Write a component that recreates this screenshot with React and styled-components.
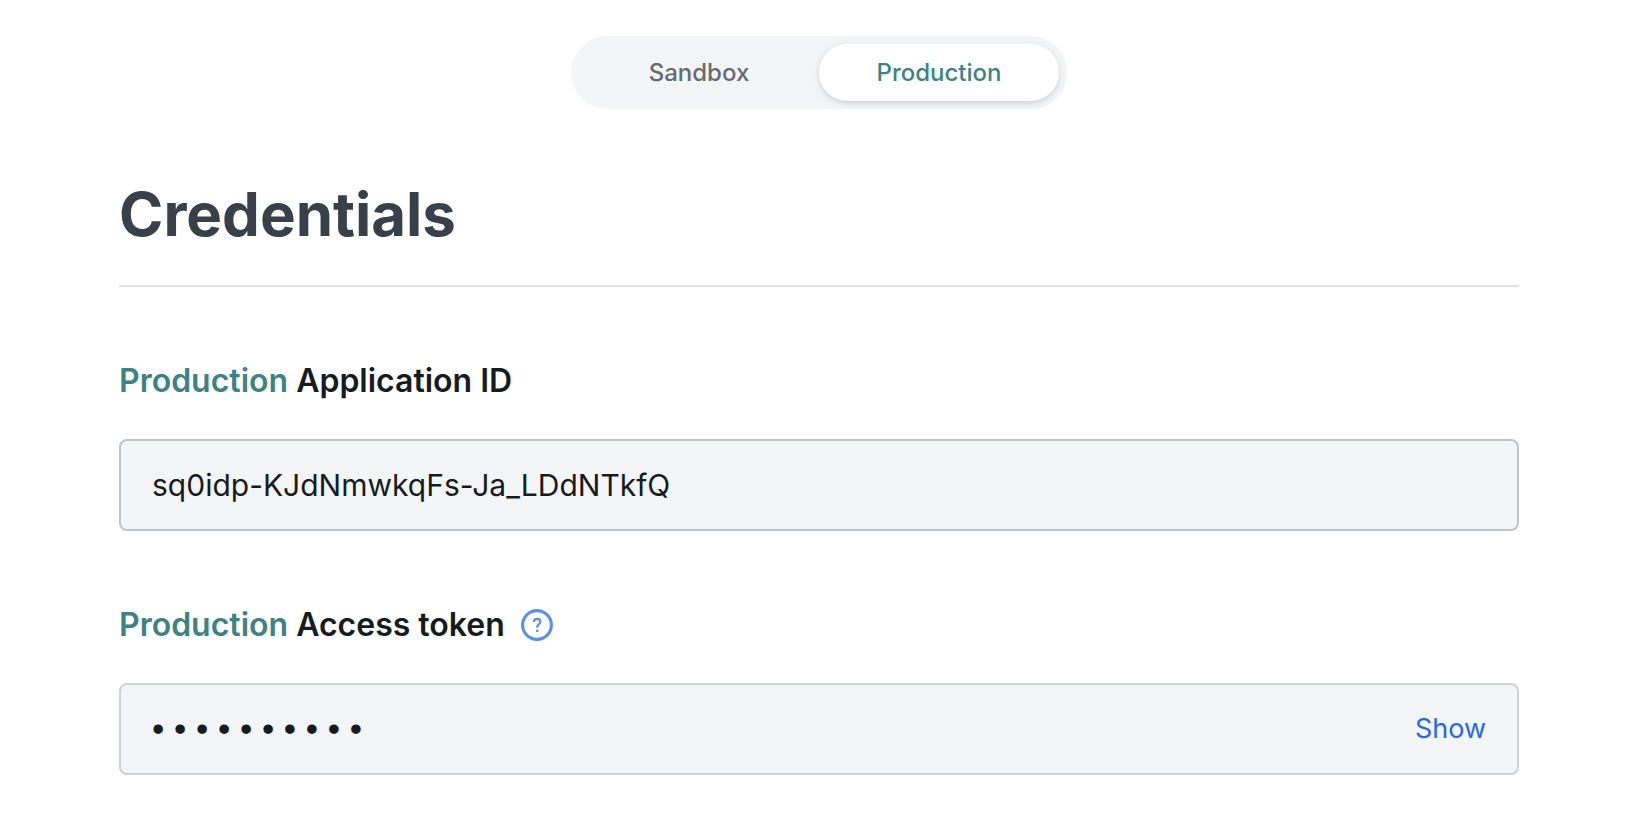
import React, { useState } from "react";
import styled, { createGlobalStyle } from "styled-components";

const GlobalStyle = createGlobalStyle`
  * {
    box-sizing: border-box;
  }
  body {
    margin: 0;
    background-color: #ffffff;
    font-family: "Inter", "Roboto", sans-serif;
    color: #161b20;
  }
  button, input {
    font-family: inherit;
  }
`;

const Page = styled.main`
  display: flex;
  flex-direction: column;
  padding: 36px 117px 40px 119px;
  @media (max-width: 760px) {
    padding: 24px 20px;
  }
`;

const Toggle = styled.div`
  display: flex;
  align-self: center;
  padding: 8px;
  border-radius: 36px;
  background-color: #f4f5f7;
`;

const ToggleButton = styled.button`
  width: 240px;
  height: 57px;
  padding: 0;
  border: none;
  border-radius: 28px;
  font-size: 24px;
  font-weight: 500;
  cursor: pointer;
  color: ${({ $active }) => ($active ? "#3e8286" : "#666b72")};
  background-color: ${({ $active }) => ($active ? "#ffffff" : "transparent")};
  box-shadow: ${({ $active }) =>
    $active
      ? "0 2px 4px rgba(0, 0, 0, 0.12), 0 2px 16px rgba(0, 0, 0, 0.05)"
      : "none"};
  @media (max-width: 760px) {
    width: 150px;
  }
`;

const Title = styled.h1`
  margin: 69px 0 0;
  padding-bottom: 35px;
  border-bottom: 2px solid #e0e1e3;
  font-size: 60px;
  font-weight: 700;
  line-height: 72px;
  color: #3a404a;
`;

const Field = styled.section`
  display: flex;
  flex-direction: column;
  gap: 38px;
  margin-top: 74px;
`;

const LabelRow = styled.div`
  display: flex;
  align-items: center;
  gap: 16px;
  height: 40px;
`;

const Label = styled.label`
  font-size: 32px;
  font-weight: 600;
  line-height: 40px;
  span {
    color: #3e8286;
  }
`;

const HelpButton = styled.button`
  display: flex;
  padding: 0;
  border: none;
  background: none;
  color: #5c90e2;
  cursor: pointer;
`;

const InputBox = styled.div`
  display: flex;
  align-items: center;
  height: 92px;
  padding: 0 31px;
  border: 2px solid ${({ $light }) => ($light ? "#d0d1d5" : "#c0c3c8")};
  border-radius: 8px;
  background-color: #f4f5f7;
`;

const Input = styled.input`
  flex: 1;
  min-width: 0;
  padding: 0;
  border: none;
  outline: none;
  background: none;
  color: #161b20;
  font-size: 30px;
  line-height: 40px;
`;

const MaskedInput = styled(Input)`
  font-family: "Liberation Sans", sans-serif;
  font-size: 35px;
`;

const ShowButton = styled.button`
  padding: 0;
  border: none;
  background: none;
  color: #2b67e4;
  font-size: 27px;
  line-height: 40px;
  cursor: pointer;
`;

const HelpIcon = () => (
  <svg width="32" height="32" viewBox="0 0 32 32" fill="none" aria-hidden="true">
    <circle cx="16" cy="16" r="14.4" stroke="currentColor" strokeWidth="3.1" />
    <path
      d="M12.9 12.9c0-1.9 1.4-3.1 3.3-3.1s3.2 1.1 3.2 2.8c0 1.3-.7 2-1.6 2.7-1 .8-1.6 1.4-1.6 2.7v.7"
      stroke="currentColor"
      strokeWidth="2.2"
    />
    <circle cx="16.2" cy="21.8" r="1.4" fill="currentColor" />
  </svg>
);

const environments = ["Sandbox", "Production"];

const App = () => {
  const [environment, setEnvironment] = useState("Production");

  return (
    <>
      <GlobalStyle />
      <Page>
        <Toggle role="group" aria-label="Environment">
          {environments.map((name) => (
            <ToggleButton
              key={name}
              type="button"
              $active={name === environment}
              aria-pressed={name === environment}
              onClick={() => setEnvironment(name)}
            >
              {name}
            </ToggleButton>
          ))}
        </Toggle>

        <Title>Credentials</Title>

        <Field>
          <LabelRow>
            <Label htmlFor="application-id">
              <span>{environment}</span> Application ID
            </Label>
          </LabelRow>
          <InputBox>
            <Input
              id="application-id"
              type="text"
              readOnly
              value="sq0idp-KJdNmwkqFs-Ja_LDdNTkfQ"
            />
          </InputBox>
        </Field>

        <Field>
          <LabelRow>
            <Label htmlFor="access-token">
              <span>{environment}</span> Access token
            </Label>
            <HelpButton type="button" aria-label="Help">
              <HelpIcon />
            </HelpButton>
          </LabelRow>
          <InputBox $light>
            <MaskedInput
              id="access-token"
              type="text"
              readOnly
              value="• • • • • • • • • •"
            />
            <ShowButton type="button">Show</ShowButton>
          </InputBox>
        </Field>
      </Page>
    </>
  );
};

export default App;
